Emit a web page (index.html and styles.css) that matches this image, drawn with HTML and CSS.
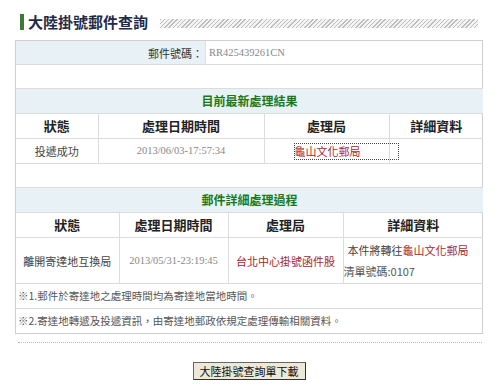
FILE: index.html
```html
<!DOCTYPE html>
<html>
<head>
<meta charset="utf-8">
<link rel="stylesheet" href="styles.css">
</head>
<body>
<div class="page">
  <div class="title-row">
    <span class="bar"></span>
    <h1 class="title">大陸掛號郵件查詢</h1>
    <span class="hatch"></span>
  </div>

  <div class="box">
    <table class="grid no-top">
      <tr class="row24">
        <td class="label">郵件號碼：</td>
        <td class="value">RR425439261CN</td>
      </tr>
      <tr class="blank"><td colspan="2"></td></tr>
    </table>

    <table class="grid t1">
      <colgroup><col style="width:82px"><col style="width:166px"><col style="width:125px"><col style="width:94px"></colgroup>
      <tr class="sect"><td colspan="4">目前最新處理結果</td></tr>
      <tr class="head"><td>狀態</td><td>處理日期時間</td><td>處理局</td><td>詳細資料</td></tr>
      <tr class="data">
        <td>投遞成功</td>
        <td class="date">2013/06/03-17:57:34</td>
        <td class="link-cell"><a class="focus">龜山文化郵局</a></td>
        <td></td>
      </tr>
      <tr class="blank"><td colspan="4"></td></tr>
    </table>

    <table class="grid t2">
      <colgroup><col style="width:103px"><col style="width:109px"><col style="width:115px"><col style="width:140px"></colgroup>
      <tr class="sect"><td colspan="4">郵件詳細處理過程</td></tr>
      <tr class="head"><td>狀態</td><td>處理日期時間</td><td>處理局</td><td>詳細資料</td></tr>
      <tr class="data tall">
        <td>離開寄達地互換局</td>
        <td class="date">2013/05/31-23:19:45</td>
        <td class="red">台北中心掛號函件股</td>
        <td class="detail"><div class="d1">本件將轉往<span class="red">龜山文化郵局</span></div><div class="d2">清單號碼:0107</div></td>
      </tr>
      <tr class="note"><td colspan="4">※1.郵件於寄達地之處理時間均為寄達地當地時間。</td></tr>
      <tr class="note"><td colspan="4">※2.寄達地轉遞及投遞資訊，由寄達地郵政依規定處理傳輸相關資料。</td></tr>
    </table>
  </div>

  <div class="dots"></div>
  <div class="btn-row"><button class="btn">大陸掛號查詢單下載</button></div>
</div>
</body>
</html>
```

FILE: styles.css
```css
html, body {
  margin: 0;
  padding: 0;
  background: #fff;
}
body {
  font-family: "Noto Sans CJK TC", "Noto Sans", sans-serif;
  font-size: 10.5px;
  color: #444;
}
.page {
  width: 468px;
  padding: 11px 0 0 15px;
}
.title-row {
  display: flex;
  align-items: center;
  height: 22px;
  margin-bottom: 7px;
}
.bar {
  flex: none;
  width: 4px;
  height: 16px;
  background: #3e7a36;
  margin-left: 5px;
  margin-right: 4px;
}
.title {
  flex: none;
  margin: 0;
  font-size: 15px;
  font-weight: bold;
  color: #1f2b48;
  line-height: 22px;
  white-space: nowrap;
}
.hatch {
  flex: none;
  width: 318px;
  height: 9px;
  margin-left: 12px;
  margin-top: 2px;
  background: repeating-linear-gradient(135deg, #bdbdbd 0 1px, #f4f4f4 1px 3px);
}
.box {
  border: 1px solid #cfcfcf;
  width: 466px;
}
.grid {
  width: 466px;
  border-collapse: collapse;
  table-layout: fixed;
}
.grid td {
  padding: 0;
  border-top: 1px solid #dcdcdc;
  line-height: 16px;
}
.no-top tr:first-child td { border-top: none; }
.row24 td { height: 23px; }
.label {
  width: 187px;
  background: #e8f1f5;
  text-align: right;
  color: #333;
  font-size: 11px;
  padding-right: 2px !important;
  border-right: 1px solid #e0e0e0;
}
.value {
  font-family: "Liberation Serif", serif;
  color: #888;
  font-size: 10.5px;
  padding-left: 3px !important;
}
.blank td { height: 23px; }
.sect td {
  height: 24px;
  background: #e8f1f5;
  text-align: center;
  color: #177a17;
  font-weight: bold;
  font-size: 12px;
}
.head td {
  height: 24px;
  text-align: center;
  font-weight: bold;
  color: #222;
  font-size: 13px;
  border-left: 1px solid #dcdcdc;
}
.head td:first-child { border-left: none; }
.data td {
  height: 24px;
  text-align: center;
  color: #444;
  font-size: 11px;
  border-left: 1px solid #dcdcdc;
}
.data td:first-child { border-left: none; }
.data.tall td { height: 45px; }
.data td.date {
  font-family: "Liberation Serif", serif;
  color: #888;
  font-size: 10.5px;
}
.red { color: #a8242a !important; }
.link-cell {
  text-align: left !important;
  padding-left: 30px !important;
  overflow: visible;
  white-space: nowrap;
}
.focus {
  display: inline-block;
  width: 103px;
  height: 15px;
  line-height: 15px;
  color: #a8242a;
  outline: 1px dotted #444;
  margin-top: 1px;
}
.detail {
  text-align: left !important;
  vertical-align: top;
}
.d1 {
  padding: 4px 0 0 4px;
  height: 18px;
}
.d2 {
  padding-top: 3px;
  color: #555;
}
.note td {
  height: 24px;
  padding-left: 2px;
  color: #555;
  font-size: 10.5px;
}
.dots {
  margin-top: 8px;
  margin-left: 3px;
  width: 464px;
  border-top: 1px dotted #bbb;
}
.btn-row {
  display: flex;
  justify-content: center;
  padding-top: 19px;
}
.btn {
  margin-left: 0;
  width: 113px;
  height: 18px;
  padding: 0;
  background: #ece9d8;
  border: 1px solid #666;
  border-right-color: #333;
  border-bottom-color: #333;
  font-family: "Noto Sans CJK TC", sans-serif;
  font-size: 11px;
  line-height: 16px;
  color: #111;
}
```
